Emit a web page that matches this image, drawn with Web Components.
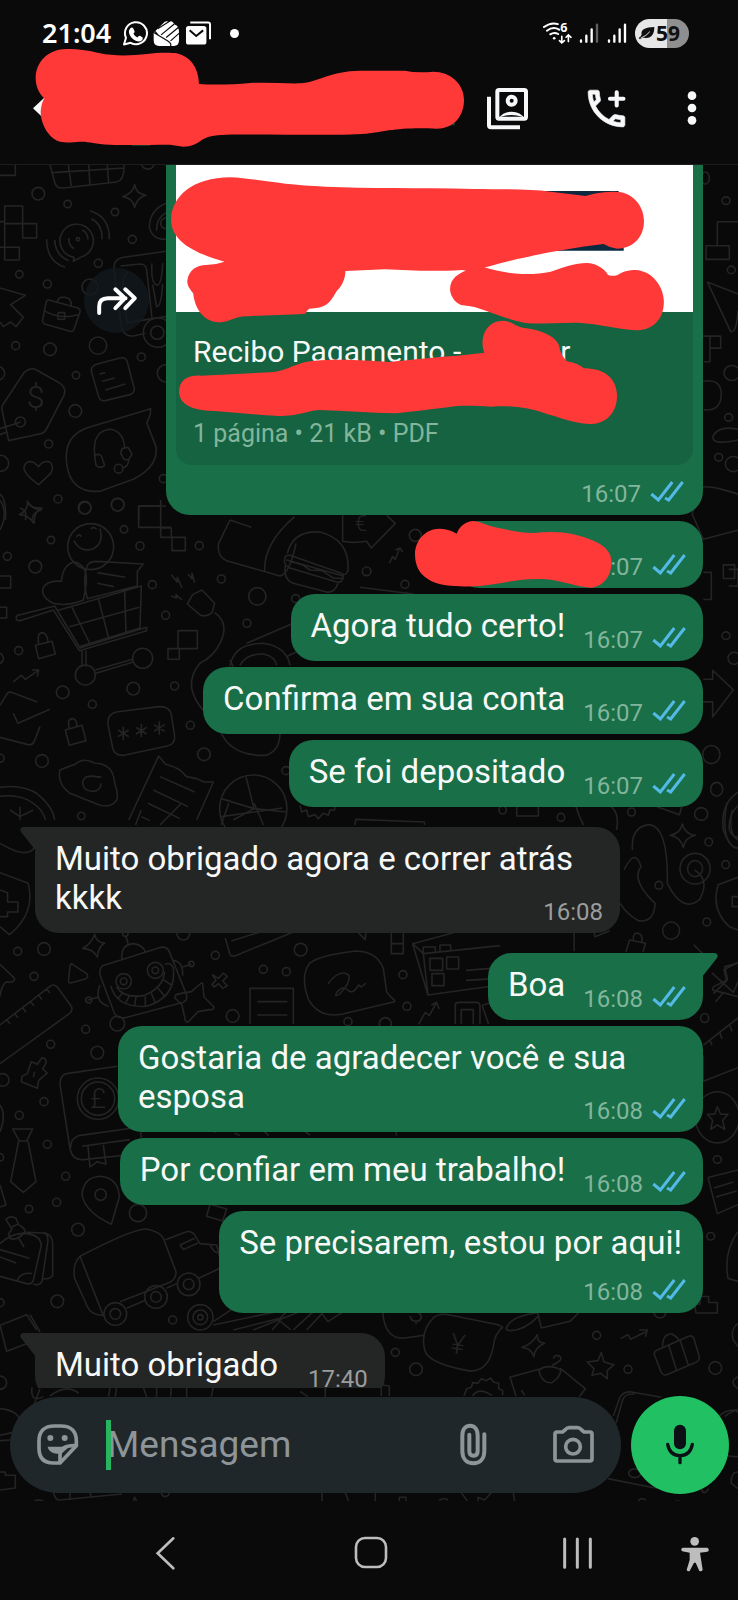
<!DOCTYPE html>
<html lang="pt-BR">
<head>
<meta charset="utf-8">
<meta name="viewport" content="width=device-width, initial-scale=1">
<title>Conversa</title>
<style>
  html, body { margin: 0; height: 100%; background: #0a0a0a; }
  body { font-family: Roboto, "Noto Sans", sans-serif; color: #f7f8f8; }
</style>
</head>
<body>
<chat-app></chat-app>

<template id="wallpaper-art">
  <svg viewBox="0 165 738 1336" preserveAspectRatio="xMidYMin slice" aria-hidden="true">
    <g transform="translate(0 160) scale(.3333)">
      <path d="M0 46H46V15M150 15L165 70Q170 86 190 84L350 66Q374 60 372 15M158 38L374 24M205 15L214 78M266 15L270 74M322 15L326 68M425 15A20 20 0 0 0 462 15"/>
      <path d="M404 74Q408 102 438 106Q412 112 404 142Q398 114 368 110Q400 100 404 74ZM14 138H68V191H110V234H68V191H14ZM0 185H14M14 191V262M0 262H58V300H14V262"/>
      <path d="M222 292A50 50 0 1 1 246 290L220 304Z"/><circle cx="234" cy="238" r="5"/>
      <path d="M270 152Q330 170 328 238M274 176Q308 192 306 238M140 238Q140 305 196 322M164 240Q166 286 206 302M206 234Q206 258 222 266M246 210Q262 216 264 238M498 130Q450 150 448 200Q456 240 498 238M498 158Q468 176 470 212M498 174A14 14 0 0 0 498 206"/>
      <path d="M498 274L370 292Q338 298 342 330L364 500Q370 530 400 528L436 520M362 318L420 312Q438 312 440 330L456 474M384 336Q360 360 372 400L380 488L498 470M456 310Q452 370 470 376Q486 376 488 310M458 374L470 440Q484 440 488 372"/>
      <circle cx="474" cy="518" r="44"/><circle cx="472" cy="518" r="20"/><circle cx="270" cy="381" r="24"/>
      <path d="M0 384L76 406L32 434L70 472L48 500L32 486L10 500L0 486M146 420L234 444Q242 448 240 456L222 508Q218 516 210 514L134 492Q126 488 128 480L138 428Q140 420 146 420ZM172 426Q174 410 194 412Q216 414 214 440M132 452Q180 480 234 464M174 458H194V478H174Z"/>
      <path d="M72 638Q92 620 110 630L180 670Q200 684 192 706L140 806Q134 820 118 822L26 842L6 750Q4 740 10 732ZM0 806L62 786M0 824L20 816"/><circle cx="61" cy="786" r="15"/>
      <path d="M292 612L360 594Q378 590 382 606L402 682Q406 698 390 704L316 722Q300 724 296 710L274 634Q272 618 292 612ZM298 642L316 638M306 664L344 654M316 690L376 672M452 746L380 768L260 804Q190 830 200 910Q210 1000 300 994L400 958Q476 920 468 860L440 788Q452 770 452 746Z"/>
      <path d="M284 886Q276 810 334 808Q370 816 374 862M284 888Q294 878 304 888L314 916Q300 928 288 916ZM366 866L384 862L396 882L386 900L372 898L362 880ZM386 900Q386 920 366 924"/><circle cx="356" cy="926" r="13"/>
      <path d="M116 974Q70 942 72 920Q80 898 102 908L116 920Q128 900 150 906Q164 920 152 940ZM80 1022Q92 1046 124 1050Q98 1056 96 1080M76 1080Q84 1052 60 1044M0 1002Q20 1020 16 1080M416 1080V1038H498"/>
      <g><circle cx="115" cy="101" r="19"/><circle cx="203" cy="132" r="11"/><circle cx="345" cy="156" r="11"/><circle cx="397" cy="238" r="12"/><circle cx="295" cy="310" r="12"/><circle cx="58" cy="343" r="11"/><circle cx="142" cy="372" r="12"/><circle cx="47" cy="557" r="12"/><circle cx="150" cy="568" r="19"/><circle cx="294" cy="557" r="26"/><circle cx="424" cy="591" r="12"/><circle cx="228" cy="646" r="11"/><circle cx="-6" cy="640" r="20"/><circle cx="226" cy="753" r="19"/><circle cx="146" cy="852" r="12"/><circle cx="2" cy="910" r="24"/><circle cx="174" cy="1017" r="12"/><circle cx="255" cy="1044" r="18"/><circle cx="353" cy="1034" r="19"/><circle cx="490" cy="956" r="12"/><circle cx="498" cy="640" r="26"/></g>
      <text x="80" y="744" font-size="96">$</text>
    </g>
    <g transform="translate(0 500) scale(.3333)">
      <path d="M84 6Q92 26 126 24Q102 34 102 70Q84 44 58 44Q82 34 84 6ZM0 0Q26 40 0 90M416 18H482V112H514V84H482V0M416 18V82H514M516 112H556V152H516Z"/>
      <circle cx="272" cy="140" r="69"/><path d="M222 122Q240 160 280 146Q312 130 300 86M228 110L238 104L244 110M272 86L282 82L290 88"/>
      <path d="M250 300Q200 320 160 310Q120 290 130 262Q144 240 184 244Q190 190 226 186Q270 200 256 270ZM262 196Q270 184 290 184L430 192L412 214V258L262 296Q246 240 262 196ZM292 218L376 232M292 250L342 260M50 360Q44 346 60 344L164 318L240 444L440 382V392L238 452L160 330L60 362ZM170 332L424 258L420 384L238 440M215 320L270 432M295 296L326 414M374 272L378 396M208 380L418 322M246 452V500M258 452V500M286 510L398 478M288 520L400 486"/>
      <circle cx="256" cy="525" r="30"/><circle cx="428" cy="475" r="30"/>
      <path d="M106 436L156 424L166 462L116 476ZM116 430Q110 396 130 398Q142 402 144 426M40 546L64 526L76 538L114 512M96 510L116 510L112 530M0 228H32V264H0M0 322H20V354H0M0 616L22 580Q28 574 38 578L112 606M40 640L54 670L150 628M0 712L84 734Q96 736 102 726L120 680M196 690L246 676L258 722L208 736ZM208 686Q200 654 220 656Q232 660 230 680"/>
      <path d="M348 636L476 620Q508 618 514 644L524 708Q526 732 502 738L372 766Q344 768 338 744L324 674Q322 642 348 636Z"/>
      <path d="M370 680V720M354 690L386 710M386 690L354 710M424 672V712M408 682L440 702M440 682L408 702M478 664V704M462 674L494 694M494 674L462 694"/>
      <path d="M514 224L532 246L532 232L546 264M564 222L576 236V220L584 248M514 288L530 294L528 284L546 300M562 312L578 284L606 270L644 310L636 338Q620 352 602 346ZM644 338Q690 370 660 430Q640 470 600 490Q540 560 620 642M534 392H592V446H534ZM504 446H538V478H504Z"/>
      <path d="M690 60L656 130Q650 170 680 182L840 228Q870 220 888 130M884 50Q790 130 794 216M690 60L754 82M862 160Q880 90 960 96Q1050 120 1044 210Q1040 230 1024 220L870 166Q856 164 854 176Q850 196 870 204L1010 246Q1030 250 1030 228L860 180L910 196L930 210L966 212L1000 234L1030 236M856 196Q850 240 880 250L980 276Q1004 280 1014 250M1028 46V124Q1060 130 1100 124L1114 144L1186 70L1160 46M1168 190L1178 170L1186 178L1198 146M1186 150L1200 144L1208 156M1080 262L1240 282"/>
      <path d="M690 500Q700 430 790 430Q860 440 870 496M720 496Q740 460 790 462Q826 470 830 496M740 430L880 370M860 470L900 450M660 690Q690 770 800 766Q840 750 840 700M700 500L690 480"/>
      <path d="M180 810Q220 794 224 794Q250 770 284 790Q340 790 344 850Q356 880 350 900Q336 924 300 916L210 880Q170 850 180 810ZM296 832Q250 820 248 850Q254 880 290 872Q304 864 302 850M290 832L304 830M386 960L476 768L496 792L520 800L540 810L560 830L590 836L612 846L640 846L590 960M480 830L584 876M460 870L564 920M444 910L540 956M424 950L450 962"/>
      <circle cx="760" cy="926" r="101"/><path d="M738 830L762 926L860 936M762 926L700 960M762 926L664 896M-10 864Q60 850 110 880Q160 920 164 960M-10 890Q60 880 100 910Q130 930 136 960M60 920V960M60 950L30 930M60 950L100 930M900 916L905 936L920 930L925 950L945 944L955 956L970 940L985 946L990 930L1004 930V914"/>
      <g><circle cx="254" cy="23" r="19"/><circle cx="353" cy="14" r="19"/><circle cx="372" cy="88" r="11"/><circle cx="153" cy="120" r="11"/><circle cx="420" cy="138" r="12"/><circle cx="22" cy="169" r="12"/><circle cx="106" cy="200" r="19"/><circle cx="598" cy="137" r="12"/><circle cx="457" cy="254" r="12"/><circle cx="664" cy="237" r="12"/><circle cx="772" cy="289" r="26"/><circle cx="887" cy="296" r="12"/><circle cx="497" cy="346" r="12"/><circle cx="741" cy="370" r="12"/><circle cx="56" cy="452" r="12"/><circle cx="-6" cy="475" r="16"/><circle cx="524" cy="558" r="12"/><circle cx="400" cy="566" r="19"/><circle cx="188" cy="577" r="19"/><circle cx="277" cy="613" r="12"/><circle cx="571" cy="676" r="12"/><circle cx="612" cy="763" r="19"/><circle cx="126" cy="783" r="19"/><circle cx="0" cy="775" r="12"/><circle cx="858" cy="812" r="12"/><circle cx="244" cy="948" r="11"/><circle cx="1100" cy="214" r="13"/><circle cx="1215" cy="253" r="12"/><circle cx="1246" cy="106" r="18"/></g>
      <text x="1064" y="94" font-size="66">€</text>
    </g>
    <g transform="translate(0 800) scale(.4706 .3333)">
      <path d="M288 75L300 30M340 75L384 12M470 75L486 10M470 50L600 24M540 10L560 75M754 75L756 58L902 66V75M1222 10Q1230 50 1240 75M1310 90Q1320 20 1280 10M1396 20L1444 44L1450 12M1098 14V48H1144V14M1344 150Q1340 80 1380 74Q1420 80 1418 250Q1450 340 1486 300Q1510 240 1476 210M1326 210Q1350 140 1362 200Q1340 240 1392 310Q1390 370 1356 362Q1330 340 1318 310"/>
      <path d="M1450 72Q1456 104 1478 106Q1456 112 1452 142Q1446 112 1424 106Q1446 100 1450 72ZM1568 232L1526 254Q1510 330 1550 380L1568 390M1568 290H1556V320H1568M1544 10Q1530 130 1568 146M1556 30Q1546 100 1568 120"/>
      <ellipse cx="1477" cy="206" rx="32" ry="46"/><ellipse cx="1477" cy="206" rx="16" ry="24"/><ellipse cx="1426" cy="392" rx="18" ry="26"/><ellipse cx="1400" cy="256" rx="8" ry="12"/><ellipse cx="1506" cy="126" rx="8" ry="12"/><ellipse cx="1490" cy="42" rx="14" ry="19"/><ellipse cx="1342" cy="36" rx="8" ry="12"/><ellipse cx="1192" cy="52" rx="8" ry="12"/><ellipse cx="1068" cy="30" rx="8" ry="12"/><ellipse cx="1542" cy="194" rx="8" ry="12"/><ellipse cx="1502" cy="366" rx="8" ry="12"/>
      <path d="M0 218L60 250Q76 340 20 404L0 380M0 270L16 278V306H38V336H16V350H0M1330 456L1338 420L1372 430L1366 456M1346 424Q1344 396 1356 400Q1366 404 1364 426M1220 392V454M1262 392L1264 410L1296 392M1474 434L1494 462M1568 490L1540 500L1546 540L1516 560L1514 570L1568 590M1538 576L1520 606M0 130Q60 180 74 140"/>
    </g>
    <g transform="translate(0 925) scale(.3333)">
      <path d="M284 28Q290 54 314 54Q294 66 292 96Q280 72 248 70Q274 58 284 28ZM0 118L44 160Q44 176 20 170Q4 180 0 214M214 116L260 146Q268 156 256 162L212 174Q204 174 206 164L210 122ZM0 300L150 184Q160 176 170 184L214 244Q220 256 208 266L0 416M20 284L30 296M44 266L54 278M68 248L78 262M92 230L102 242M116 210L126 224M140 192L150 204"/>
      <path d="M308 122L478 68Q500 62 508 80L560 210Q562 226 550 232L376 278Q350 282 342 262L300 150Q298 130 308 122ZM366 104Q360 60 400 56Q430 60 436 82M378 34L384 56M300 180Q280 230 326 244M262 226L296 216M520 106Q550 110 548 152M548 126L574 118M332 182Q350 250 440 244Q530 216 520 130Q514 110 494 118M350 186Q370 220 430 212Q490 190 494 140M352 222L368 204M376 236L388 212M404 242L408 216M436 244V214M466 234L454 204M494 214L474 190M514 180L490 164"/>
      <circle cx="371" cy="169" r="23"/><circle cx="371" cy="169" r="10"/><circle cx="466" cy="136" r="24"/><circle cx="466" cy="136" r="10"/><circle cx="266" cy="225" r="9"/><circle cx="574" cy="117" r="8"/><circle cx="376" cy="26" r="8"/>
      <path d="M608 174L612 216L642 246Q640 256 630 254L594 260L564 292Q554 290 554 276L546 240L524 218Q524 208 540 206L574 200L604 174ZM638 150L656 160L670 144L682 154L668 168L682 182L668 190L656 176L642 186L636 178L648 166ZM676 40L690 88Q694 96 706 92L888 18M694 48L790 18M750 296V190H880V296M772 230H862M772 270H862M1184 230L1050 262Q960 290 924 220Q900 150 930 114Q960 90 1070 78Q1130 80 1150 130L1160 200Q1166 210 1184 226ZM984 176Q1020 130 1046 150Q1054 170 1020 206Q1000 220 1012 200Q1030 180 1044 196Q1060 210 1076 180L1084 186L1098 174M1070 18L1096 44L1098 18M1174 18V86H1210V18M1174 56H1210M1500 62L1270 86L1284 210L1500 180M1270 86L1238 56L1380 18M1238 56L1284 210M1290 100H1328V136H1290ZM1340 96H1376V132H1340ZM1296 146H1332V182H1296ZM1270 84V66H1306V82M1320 78V60H1352V78M1398 136L1500 128M1398 166L1500 160M1256 298L1276 262L1288 272L1308 236M1294 240L1310 232L1318 252M1366 298V240Q1366 232 1376 232H1430Q1440 232 1440 242V298M1384 298V254H1420V298M1446 240L1466 298M1448 240L1480 232"/>
      <path d="M126 398Q140 400 138 414L128 432L142 444L116 466L112 490L64 470L66 454L82 446L94 410L112 418ZM104 440L100 456M352 424L200 446Q180 450 180 480L210 670Q216 706 250 704L380 690M212 670Q210 640 236 632L420 606L424 640M246 664L390 644M264 664L270 726L292 710L318 718L310 660"/>
      <circle cx="294" cy="521" r="62"/><circle cx="294" cy="521" r="50"/>
      <path d="M38 612H98L80 648H58ZM56 648L32 770L70 802L108 770L84 648M0 540Q20 570 0 620M0 780L18 840L0 846M334 898Q256 862 246 810Q250 756 302 754Q356 760 358 816ZM630 838L680 852L668 888L620 874ZM640 620H650M704 624L720 632M790 616L806 632M910 616L930 630M1186 616L1190 632M18 884Q30 870 48 880L56 900Q72 906 76 920Q50 950 30 940L26 926L36 912ZM54 936L72 966M36 906L56 896M0 956Q40 920 80 926Q120 930 124 960L100 1066Q96 1080 80 1076L0 1054M80 922L130 924Q144 926 144 946L126 1070Q120 1082 100 1078M130 922Q160 930 158 960V1050Q156 1062 130 1062M0 974L88 1000M0 996L48 1014M50 1070Q60 1040 96 1046M240 994Q400 910 440 912Q480 920 490 940L528 1040Q530 1060 510 1072L360 1130M310 1172Q270 1170 260 1140L224 1060Q216 1020 240 994ZM496 944L560 920Q580 916 590 940L600 956L650 960L660 1000M540 960L584 940M540 960L550 974L594 954M380 1150L436 1126M500 1090L530 1076M596 1060L660 1030M640 1200L830 1160M700 1215L840 1180L860 1160M630 960Q640 980 652 984M640 1190L700 1150M760 1215L900 1160M816 1215L840 1188L872 1215M880 1215L940 1160M920 1215L966 1166L984 1190L1030 1160"/>
      <circle cx="346" cy="1167" r="34"/><circle cx="346" cy="1167" r="16"/><circle cx="468" cy="1116" r="34"/><circle cx="468" cy="1116" r="16"/><circle cx="566" cy="1078" r="34"/><circle cx="566" cy="1078" r="16"/><circle cx="601" cy="1177" r="38"/><circle cx="601" cy="1177" r="22"/><circle cx="601" cy="1177" r="8"/>
      <g><circle cx="53" cy="79" r="12"/><circle cx="132" cy="72" r="19"/><circle cx="102" cy="154" r="12"/><circle cx="550" cy="26" r="19"/><circle cx="646" cy="91" r="12"/><circle cx="790" cy="133" r="12"/><circle cx="859" cy="140" r="12"/><circle cx="902" cy="74" r="19"/><circle cx="698" cy="273" r="19"/><circle cx="352" cy="296" r="22"/><circle cx="257" cy="313" r="12"/><circle cx="152" cy="358" r="12"/><circle cx="292" cy="383" r="19"/><circle cx="8" cy="465" r="19"/><circle cx="132" cy="530" r="12"/><circle cx="58" cy="571" r="12"/><circle cx="142" cy="658" r="12"/><circle cx="0" cy="697" r="11"/><circle cx="197" cy="754" r="12"/><circle cx="170" cy="832" r="12"/><circle cx="87" cy="852" r="11"/><circle cx="302" cy="809" r="17"/><circle cx="414" cy="864" r="26"/><circle cx="234" cy="914" r="19"/><circle cx="172" cy="1129" r="19"/><circle cx="0" cy="1133" r="12"/><circle cx="518" cy="1185" r="12"/><circle cx="1209" cy="149" r="12"/><circle cx="1221" cy="244" r="12"/><circle cx="1044" cy="290" r="12"/><circle cx="1156" cy="296" r="18"/></g>
      <text x="270" y="550" font-size="84">£</text>
    </g>
    <g transform="translate(600 160) scale(.3333 .7526)">
      <path d="M352 82H414M352 82V114H388V132H318V114H352M322 162L392 228Q410 230 414 200M322 162L414 178M310 234H362V250H330V268H312M330 234V250M310 294Q364 290 364 312Q362 334 312 332M340 366Q360 352 414 358M340 366Q330 380 414 372M276 470L306 436Q316 430 414 444M276 470L310 504L414 492M310 548H334V584H310M370 538H404V556H370ZM386 544H414V566H386M310 690H338V678L400 704L338 740V720H310M414 840Q360 856 370 890Q390 916 414 914M414 858Q384 870 388 890Q398 900 414 900M336 1080L400 1106L414 1092M414 1066L372 1076L380 1090L340 1108M310 1176L414 1140M310 1190V1224L414 1206M330 1170L336 1176M360 1160L366 1168M390 1150L396 1158M352 1258L362 1268H384L368 1276L374 1288L352 1282L332 1288L338 1276L322 1268H344ZM324 1352L414 1342M324 1352L352 1400L414 1388M342 1366L400 1358M348 1378L410 1370M414 1424Q370 1450 384 1486L414 1490M284 1520H300V1510H326V1518H352V1532H288Z"/>
      <ellipse cx="352" cy="1272" rx="66" ry="34"/><ellipse cx="334" cy="790" rx="26" ry="12"/><ellipse cx="350" cy="836" rx="18" ry="9"/><ellipse cx="378" cy="54" rx="12" ry="5"/><ellipse cx="316" cy="24" rx="12" ry="8"/><ellipse cx="394" cy="146" rx="12" ry="5"/><ellipse cx="396" cy="283" rx="24" ry="10"/><ellipse cx="386" cy="342" rx="12" ry="5"/><ellipse cx="356" cy="395" rx="12" ry="5"/><ellipse cx="400" cy="404" rx="24" ry="10"/><ellipse cx="378" cy="632" rx="12" ry="5"/><ellipse cx="402" cy="662" rx="18" ry="8"/><ellipse cx="314" cy="1140" rx="12" ry="6"/><ellipse cx="352" cy="1328" rx="12" ry="5"/><ellipse cx="332" cy="1430" rx="12" ry="5"/>
    </g>
    <g transform="translate(368 1310) scale(.3333)">
      <path d="M44 4Q50 90 110 84L168 76M404 52Q380 70 376 110Q360 190 300 182Q180 160 170 120Q156 60 200 20Q220 8 250 16L390 44ZM416 52Q430 20 500 10Q516 6 510 20Q470 60 430 62Q410 60 416 52ZM508 4L520 54L606 34L636 4M508 74Q506 98 530 100Q500 112 498 140Q490 114 462 112Q494 102 508 74ZM758 86L780 74L788 88L832 66M814 60L838 60L832 80M868 120L964 78Q974 76 978 86L994 140Q996 150 986 156L896 194Q886 198 880 188L860 136Q856 124 868 120ZM884 110Q884 70 912 72Q934 84 932 94M902 104L926 182M936 90L962 168M700 128L708 156L738 164L718 182V206L698 190L672 196L678 176L658 156L690 152ZM444 258L426 202L512 178Q520 220 552 218Q580 200 578 176L652 236L634 260M512 180Q540 160 580 180M552 166Q590 150 574 138Q560 132 556 146M460 240L470 256M288 258L296 236L310 232L314 218L330 220L340 206L354 212L368 204L376 216L392 220L392 236L404 242L404 256M314 258Q330 230 372 256M736 318L756 262Q766 244 790 246L880 262M744 340L764 270Q770 250 800 252M720 506L850 532L870 534M1110 40Q1086 60 1096 90L1110 110M1110 200Q1080 216 1110 236M1070 320Q1110 290 1110 310M1110 486Q1088 486 1090 520L1110 536M22 548V576M94 576V562H114V576M280 548L300 576M330 576V562L350 570L370 548M436 548L440 576M212 576Q220 560 240 570M810 576Q816 560 834 570M916 576Q930 570 942 576M1000 536Q1008 560 1022 536M34 224L64 228V258M40 258V230"/>
      <ellipse cx="800" cy="490" rx="18" ry="13"/><circle cx="686" cy="76" r="12"/><circle cx="780" cy="178" r="12"/><circle cx="144" cy="178" r="19"/><circle cx="82" cy="127" r="12"/><circle cx="1042" cy="174" r="19"/><circle cx="876" cy="6" r="18"/><circle cx="1100" cy="370" r="70"/>
      <text x="248" y="132" font-size="84" transform="rotate(8 270 100)">¥</text><text x="120" y="36" font-size="84">$</text>
    </g>
    <g transform="translate(0 1310) scale(.3333)">
      <path d="M0 46L80 14L110 60M90 14L120 66M0 46L20 124L110 90M0 296Q50 300 60 330M0 376L36 368M0 392L30 390M0 486H16V496H46V534L0 540M160 546Q166 572 180 570L366 552M210 548V570M270 548L274 562M484 548Q486 560 496 560Q508 558 508 546M400 574L404 562L410 574M966 546V574M1036 548L1046 574M330 232L326 260M350 232L346 260M430 232L440 260M470 232V260M514 232L512 260M560 232V260M640 232L634 260M120 236L100 290M236 250Q200 220 150 258M96 232Q90 280 130 260M900 244L924 260M976 232V260M102 574Q116 566 130 574"/>
      <circle cx="0" cy="218" r="20"/>
    </g>
  </svg>
</template>

<script>
const ICONS = {
  whatsapp: ['368 60 78 80', 26, 27, '<path d="M374 133L380 113A33 33 0 1 1 394 128Z" fill="none" stroke="currentColor" stroke-width="6" stroke-linejoin="round"/><path fill="currentColor" d="M393 84q5-5 9 1l4 9q0 4-4 7q5 8 12 11q4-6 8-5l8 5q2 9-10 12q-13 0-24-12q-9-12-7-21z"/>'],
  hands: ['464 60 80 80', 27, 27, '<path fill="currentColor" d="M466 98L498 66Q505 61 511 66Q520 60 524 68L529 74Q538 76 538 84Q541 88 541 94V122Q540 136 526 137H482Q466 136 466 120Z"/><path fill="none" stroke="#0a0a0a" stroke-width="3.5" d="M465 96L508 122Q520 130 516 138M478 86L513 64M488 104L527 72M503 112L539 82M516 122L542 99M479 104L470 94"/>'],
  mail: ['558 62 82 78', 27, 26, '<rect x="561" y="80" width="62" height="56" rx="8" fill="currentColor"/><path d="M574 69H628Q634 69 634 75V120" fill="none" stroke="currentColor" stroke-width="6"/><path d="M572 93L592 110L613 93" fill="none" stroke="#0a0a0a" stroke-width="6"/>'],
  wifi: ['526 62 94 72', 31, 24, '<g fill="none" stroke="currentColor" stroke-width="6" stroke-linecap="round"><path d="M532 80Q554 64 574 71M541 91Q560 77 578 88M551 102Q563 94 575 101"/><path stroke-width="5" d="M586 108V127M579 121L586 128L594 121M606 124V105M599 111L606 104L614 111"/></g><circle cx="563" cy="114" r="4" fill="currentColor"/><text x="581" y="94" font-size="38" font-weight="700" font-family="Noto Sans, sans-serif" fill="currentColor">6</text>'],
  signalWeak: ['634 64 66 66', 22, 22, '<g stroke="currentColor" stroke-width="7" stroke-linecap="round"><path d="M640 119V123M656 105V123M672 86V123"/><path d="M688 72V123" opacity=".35"/></g>'],
  signal: ['634 64 66 66', 22, 22, '<g stroke="currentColor" stroke-width="7" stroke-linecap="round"><path d="M640 119V123M656 105V123M672 86V123M688 72V123"/></g>'],
  leaf: ['806 78 52 42', 17, 14, '<path fill="currentColor" d="M817 104C814 88 828 82 856 81C856 104 846 116 828 114Q820 113 812 118L808 114Q815 110 817 104Z"/><path d="M814 115Q832 108 842 95" fill="none" stroke="#e6e6e6" stroke-width="3"/>'],
  back: ['96 288 42 72', 14, 24, '<path fill="currentColor" d="M99 325L136 290V360Z"/>'],
  contact: ['354 259 129 129', 43, 43, '<g fill="none" stroke="currentColor"><rect x="388" y="268" width="86" height="86" rx="5" stroke-width="12"/><path stroke-width="12" d="M363 288V374Q363 380 369 380H456"/><circle cx="431" cy="300" r="12" stroke-width="12"/></g><path fill="currentColor" d="M392 354Q404 333 431 333Q458 333 470 354L462 348Q446 343 431 343Q416 343 400 348Z"/>'],
  call: ['0 0 24 24', 49, 49, '<path fill="currentColor" stroke="currentColor" stroke-width=".3" d="M6.540 5c.06.89.21 1.760.45 2.590l-1.200 1.200c-.41-1.200-.67-2.470-.76-3.790h1.510m9.860 12.020c.85.24 1.720.39 2.600.45v1.490c-1.320-.09-2.590-.35-3.800-.75l1.200-1.190M7.500 3H4c-.55 0-1 .45-1 1 0 9.390 7.610 17 17 17 .55 0 1-.45 1-1v-3.490c0-.55-.45-1-1-1-1.240 0-2.450-.2-3.570-.57-.1-.04-.21-.05-.31-.05-.26 0-.51.1-.71.29l-2.200 2.200c-2.830-1.450-5.150-3.760-6.590-6.590l2.200-2.200c.28-.28.36-.67.25-1.020C8.700 6.450 8.500 5.250 8.500 4c0-.55-.45-1-1-1z"/><path d="M17 4V10.500M13.700 7.250H20.300" stroke="currentColor" stroke-width="2" stroke-linecap="round"/>'],
  more: ['950 268 48 114', 16, 38, '<g fill="currentColor"><circle cx="974" cy="288" r="13"/><circle cx="974" cy="325" r="13"/><circle cx="974" cy="362" r="13"/></g>'],
  forward: ['284 370 132 100', 44, 33, '<path d="M296 458V438Q296 413 322 413H376M345 386L374 413L345 443M375 386L404 413L375 443" fill="none" stroke="currentColor" stroke-width="12" stroke-linecap="round" stroke-linejoin="round"/>'],
  ticks: ['1114 563 102 66', 34, 22, '<path d="M1118 605L1139 623L1181 569M1159 617L1170 623L1212 569" fill="none" stroke="#53b9e6" stroke-width="9"/>'],
  sticker: ['108 336 129 129', 43, 43, '<g fill="none" stroke="currentColor" stroke-width="11"><path d="M163 345H183C213 345 229 361 229 390V404L180 456H160C130 456 117 440 117 412V390C117 361 133 345 163 345Z" stroke-linejoin="round"/><path d="M229 404C200 403 181 408 180 432V456"/></g><g fill="currentColor"><circle cx="151" cy="381" r="9"/><circle cx="194" cy="381" r="9"/><path d="M143 407H208L184 428C166 430 146 424 143 407Z"/></g>'],
  clip: ['279 336 81 129', 27, 43, '<path d="M352 370V420C352 444 338 457 319 457C300 457 286 444 286 420V374C286 354 297 344 309 344C322 344 332 354 332 374V420C332 430 327 434 320 434C312 434 307 430 307 420V371" fill="none" stroke="currentColor" stroke-width="12" stroke-linecap="round"/>'],
  camera: ['552 339 129 123', 43, 41, '<g fill="none" stroke="currentColor" stroke-width="11"><path d="M567 363H584L592 356Q597 350 604 350H628Q635 350 640 356L648 363H666Q672 363 672 369V444Q672 450 666 450H567Q561 450 561 444V369Q561 363 567 363Z"/><circle cx="615" cy="407" r="22"/></g>'],
  mic: ['888 336 96 123', 32, 41, '<rect x="918" y="338" width="36" height="74" rx="18" fill="currentColor"/><path d="M899 397C903 420 917 431 936 431C955 431 969 420 973 397M936 431V452" fill="none" stroke="currentColor" stroke-width="10" stroke-linecap="round"/>'],
  navBack: ['462 676 69 108', 23, 36, '<path d="M520 686L473 731L520 776" fill="none" stroke="currentColor" stroke-width="8" stroke-linecap="round"/>'],
  navHome: ['0 0 36 36', 36, 36, '<rect x="3" y="3" width="30" height="29" rx="9" fill="none" stroke="currentColor" stroke-width="2.600"/>'],
  navRecent: ['580 676 105 108', 35, 36, '<path d="M594 688V773M632 688V773M671 688V773" stroke="currentColor" stroke-width="9" stroke-linecap="round"/>'],
  person: ['938 675 90 120', 30, 40, '<g fill="currentColor"><circle cx="982" cy="700" r="13"/><path d="M946 719H1020Q1026 721 1024 729Q1022 732 998 734L1006 785Q1004 792 996 789L985 764H980L967 789Q960 792 958 785L967 756V734L945 730Q938 724 946 719Z"/></g>']
};

class UiIcon extends HTMLElement {
  connectedCallback() {
    const [box, w, h, body] = ICONS[this.getAttribute('name')];
    this.attachShadow({ mode: 'open' }).innerHTML =
      `<style>:host{display:inline-flex;flex:none}svg{display:block}</style>
       <svg width="${w}" height="${h}" viewBox="${box}" aria-hidden="true">${body}</svg>`;
  }
}
customElements.define('ui-icon', UiIcon);

class StatusBar extends HTMLElement {
  connectedCallback() {
    this.attachShadow({ mode: 'open' }).innerHTML = `
    <style>
      :host { display: flex; align-items: center; height: 66px; padding: 0 49px 0 42px; box-sizing: border-box; color: #fff; }
      .time { font: 600 27px/34px "Noto Sans", sans-serif; margin-right: 11px; }
      .apps { display: flex; align-items: center; gap: 5px; flex: 1; }
      .dot { width: 9px; height: 9px; border-radius: 50%; background: #fff; margin-left: 13px; }
      .system { display: flex; align-items: center; gap: 6px; }
      .battery { display: flex; align-items: center; height: 29px; width: 54px; box-sizing: border-box; padding-left: 3px; gap: 1px;
        border-radius: 15px; background: linear-gradient(90deg, #e6e6e6 59%, #8f8f8f 59%); color: #101010; font: 700 21px/29px "Noto Sans", sans-serif; }
    </style>
    <span class="time">21:04</span>
    <span class="apps"><ui-icon name="whatsapp"></ui-icon><ui-icon name="hands"></ui-icon><ui-icon name="mail"></ui-icon><i class="dot"></i></span>
    <span class="system"><ui-icon name="wifi"></ui-icon><ui-icon name="signalWeak"></ui-icon><ui-icon name="signal"></ui-icon>
      <span class="battery"><ui-icon name="leaf"></ui-icon>59</span></span>`;
  }
}
customElements.define('status-bar', StatusBar);

class ChatHeader extends HTMLElement {
  connectedCallback() {
    this.attachShadow({ mode: 'open' }).innerHTML = `
    <style>
      :host { display: flex; align-items: center; position: relative; height: 99px; padding: 0 38px 14px 32px; box-sizing: border-box;
        border-bottom: 1px solid #1c1c1c; }
      button { all: unset; display: flex; color: #f7f8fa; }
      .actions { display: flex; align-items: center; margin-left: auto; }
      .actions button:nth-child(2) { margin: 0 53px; }
      .mark { position: absolute; left: 0; top: -66px; overflow: visible; pointer-events: none; }
    </style>
    <button aria-label="Voltar"><ui-icon name="back"></ui-icon></button>
    <div class="actions">
      <button aria-label="Contato"><ui-icon name="contact"></ui-icon></button>
      <button aria-label="Ligar"><ui-icon name="call"></ui-icon></button>
      <button aria-label="Mais opções"><ui-icon name="more"></ui-icon></button>
    </div>
    <svg class="mark" width="470" height="150" viewBox="0 0 1410 450" aria-hidden="true">
      <path fill="#0e4a31" d="M395 425H450V437H395ZM1340 366H1364V376H1340Z"/>
      <path fill="#ff3838" d="M107 235C107 185 145 147 200 147C240 147 270 152 300 160C340 169 400 167 440 162C470 158 510 157 530 160C570 170 595 200 597 252C640 255 700 254 750 249C800 246 850 251 900 250C960 245 990 213 1080 212L1215 212Q1250 220 1300 215C1350 215 1392 250 1392 300C1392 340 1370 385 1310 386C1200 380 1150 395 1100 401C1000 408 800 402 680 404C640 405 620 410 605 420C590 432 575 440 550 440L510 434C450 434 380 436 330 434C280 432 270 424 240 425C210 428 200 428 180 425C145 415 122 370 122 335Q124 310 133 295C115 280 107 255 107 235Z"/>
    </svg>`;
  }
}
customElements.define('chat-header', ChatHeader);

class ChatWallpaper extends HTMLElement {
  connectedCallback() {
    const root = this.attachShadow({ mode: 'open' });
    root.innerHTML = `<style>
      :host { display: flex; flex-direction: column; position: relative; min-height: 0; background: #090909; overflow: hidden; }
      svg { position: absolute; inset: 0; width: 100%; height: 100%; }
      svg path, svg circle, svg ellipse { fill: none; stroke: #242424; stroke-width: 1.6px; vector-effect: non-scaling-stroke; stroke-linejoin: round; }
      svg text { fill: #242424; font-family: Roboto, sans-serif; font-weight: 300; }
      .content { position: relative; display: flex; flex-direction: column; flex: 1; min-height: 0; }
    </style>`;
    root.append(document.getElementById('wallpaper-art').content.cloneNode(true));
    root.append(Object.assign(document.createElement('div'), { className: 'content', innerHTML: '<slot></slot>' }));
  }
}
customElements.define('chat-wallpaper', ChatWallpaper);

class MessageMeta extends HTMLElement {
  connectedCallback() {
    this.attachShadow({ mode: 'open' }).innerHTML = `
    <style>
      :host { display: flex; gap: 9px; flex: none; font-size: 24px; line-height: 28px; color: var(--meta, #83b59c); }
    </style>
    <time>${this.getAttribute('time')}</time>${this.hasAttribute('read') ? '<ui-icon name="ticks"></ui-icon>' : ''}`;
  }
}
customElements.define('message-meta', MessageMeta);

/* By default the time sits beside the text; layout "over" puts it on the last line, "below" under the text. */
class ChatMessage extends HTMLElement {
  connectedCallback() {
    const out = this.hasAttribute('out');
    this.attachShadow({ mode: 'open' }).innerHTML = `
    <style>
      :host { display: flex; justify-content: flex-start; --bubble: #242626; --meta: #9b9d9d; --gap: 30px; }
      :host([out]) { justify-content: flex-end; --bubble: #186f48; --meta: #83b59c; --gap: 18px; }
      .bubble { position: relative; display: flex; align-items: flex-end; gap: var(--gap); box-sizing: border-box; max-width: 585px;
        padding: 12px 17px 7px 20px; border-radius: 24px; background: var(--bubble); }
      .text { font-size: 33px; line-height: 39px; min-height: 39px; padding-bottom: 9px; }
      :host([layout="over"]) .bubble { display: grid; }
      :host([layout="over"]) .text, :host([layout="over"]) message-meta { grid-area: 1 / 1; }
      :host([layout="over"]) message-meta { justify-self: end; }
      :host([layout="below"]) .bubble { flex-direction: column; align-items: flex-end; gap: 7px; }
      :host([layout="below"]) .text { padding-right: 4px; }
      :host([covered]) .bubble { width: 248px; justify-content: flex-end; }
      :host([tail]) .bubble { border-top-left-radius: 0; }
      :host([out][tail]) .bubble { border-radius: 24px 0 24px 24px; }
      .tail { position: absolute; top: 0; left: -15px; fill: var(--bubble); }
      :host([out]) .tail { left: auto; right: -15px; transform: scaleX(-1); }
      .mark { position: absolute; right: 91px; top: 0; overflow: visible; }
    </style>
    <div class="bubble">
      ${this.hasAttribute('tail') ? '<svg class="tail" width="16" height="24" viewBox="0 0 16 24" aria-hidden="true"><path d="M16 0H3Q-1 1 1 5L16 24Z"/></svg>' : ''}
      <div class="text"><slot></slot></div>
      <message-meta time="${this.getAttribute('time')}" ${out ? 'read' : ''}></message-meta>
      ${this.hasAttribute('covered') ? '<svg class="mark" width="197" height="67" viewBox="405 30 591 201" aria-hidden="true"><path fill="#ff3838" d="M405 130C405 90 435 52 480 53Q510 55 530 68C538 45 560 30 580 30C605 32 620 45 660 52C700 60 730 66 760 66C800 62 840 60 880 70C940 85 995 105 995 155C993 200 965 229 930 230C890 228 850 210 800 205C740 200 690 212 640 220C600 226 570 228 540 226C460 225 405 200 405 130Z"/></svg>' : ''}
    </div>`;
  }
}
customElements.define('chat-message', ChatMessage);

class DocumentMessage extends HTMLElement {
  connectedCallback() {
    this.attachShadow({ mode: 'open' }).innerHTML = `
    <style>
      :host { display: flex; justify-content: flex-end; align-items: flex-start; gap: 17px; }
      button { all: unset; display: flex; align-items: center; justify-content: center; width: 65px; height: 65px; margin-top: 103px;
        border-radius: 50%; background: #11191dcc; color: #fff; }
      .bubble { position: relative; box-sizing: border-box; width: 537px; padding: 0 10px 7px; border-radius: 0 0 24px 24px; background: #186f48; }
      .card { border-radius: 0 0 16px 16px; background: #156340; overflow: hidden; }
      .preview { height: 147px; background: #fff; }
      .info { padding: 22px 17px 17px; }
      .title { display: flex; gap: 99px; height: 72px; font-size: 30px; line-height: 36px; }
      .detail { margin-top: 14px; font-size: 25px; line-height: 28px; color: #83b59c; }
      message-meta { justify-content: flex-end; padding: 15px 9px 0 0; }
      .mark { position: absolute; left: 0; top: 0; overflow: visible; }
    </style>
    <button aria-label="Encaminhar"><ui-icon name="forward"></ui-icon></button>
    <div class="bubble">
      <div class="card">
        <div class="preview"></div>
        <div class="info">
          <div class="title"><span>Recibo Pagamento -</span><span>r</span></div>
          <div class="detail">1 página • 21 kB • PDF</div>
        </div>
      </div>
      <message-meta time="16:07" read></message-meta>
      <svg class="mark" width="536" height="350" viewBox="166 165 536 350" aria-hidden="true">
        <g transform="translate(160 160) scale(.3686 .3333)">
          <path fill="#0b2a3f" d="M1000 93H1243L1258 110V272H1000Z"/>
          <g fill="#ff3838">
          <path d="M30 180C30 110 90 52 190 52C260 55 330 76 450 80C560 86 700 82 850 87C930 88 1000 87 1060 95L1155 108C1180 98 1210 95 1235 95C1280 95 1313 135 1313 183C1313 235 1280 266 1240 266Q1220 263 1203 252C1130 262 1060 275 1000 290C930 305 900 318 880 322C930 340 1000 350 1060 335C1100 320 1130 308 1160 309C1190 312 1208 330 1215 344Q1225 350 1240 346C1260 332 1275 330 1290 330C1335 332 1367 380 1367 425C1367 475 1340 511 1290 511C1250 508 1190 492 1135 488C1080 488 1030 492 1000 490C960 485 900 458 860 443C840 436 820 437 815 434C795 425 786 400 787 385C788 355 810 340 830 332L820 330C740 335 680 332 610 328L503 333C503 350 497 375 480 392C465 420 455 440 425 444L405 446Q398 450 395 461C330 466 260 466 220 470C190 476 185 487 158 487C120 485 95 450 90 400C80 385 74 378 74 362C78 330 100 315 125 315Q150 315 175 305C110 285 30 250 30 180Z"/>
          <path d="M52 695C52 660 75 645 110 647L300 637C350 632 370 605 420 602C480 596 560 600 620 606C700 598 760 590 800 588L880 578C868 550 875 482 932 482C955 484 965 500 985 503C1030 508 1085 530 1085 570C1092 590 1100 600 1105 604Q1135 610 1150 625C1200 625 1240 650 1240 710C1238 765 1205 792 1165 792C1120 790 1080 770 1050 762C1000 742 950 736 900 740C850 738 820 735 780 742C720 750 680 756 640 760C570 758 500 752 430 750C400 752 380 768 320 768C250 765 200 755 130 752C90 748 52 735 52 695Z"/>
          </g>
        </g>
      </svg>
    </div>`;
  }
}
customElements.define('document-message', DocumentMessage);

class MessageList extends HTMLElement {
  connectedCallback() {
    this.attachShadow({ mode: 'open' }).innerHTML = `
    <style>
      :host { display: flex; flex-direction: column; gap: 6px; flex: 1; min-height: 0; overflow-y: auto; scrollbar-width: none; padding: 0 35px; }
      ::slotted(*) { flex: none; }
      ::slotted([tail]) { margin-top: 14px; }
    </style><slot></slot>`;
  }
}
customElements.define('message-list', MessageList);

class MessageComposer extends HTMLElement {
  connectedCallback() {
    this.attachShadow({ mode: 'open' }).innerHTML = `
    <style>
      :host { display: flex; align-items: center; gap: 10px; height: 113px; padding: 0 9px 0 10px; box-sizing: border-box; }
      .field { display: flex; align-items: center; flex: 1; min-width: 0; height: 96px; box-sizing: border-box; padding: 0 26px; border-radius: 48px; background: #1f272a; }
      button { all: unset; display: flex; flex: none; color: #8d9598; }
      .caret { width: 5px; height: 50px; background: #27b461; margin: 0 -5px 0 27px; z-index: 1; }
      input { all: unset; flex: 1; min-width: 0; font: 400 37px/50px Roboto, sans-serif; color: #f7f8f8; padding-left: 1px; }
      input::placeholder { color: #8d9598; opacity: 1; }
      .camera { margin-left: 65px; }
      .mic { width: 98px; height: 98px; border-radius: 50%; background: #21c063; color: #0a1014; align-items: center; justify-content: center; }
    </style>
    <div class="field">
      <button aria-label="Figurinhas"><ui-icon name="sticker"></ui-icon></button>
      <span class="caret"></span>
      <input type="text" placeholder="Mensagem" aria-label="Mensagem">
      <button aria-label="Anexar"><ui-icon name="clip"></ui-icon></button>
      <button class="camera" aria-label="Câmera"><ui-icon name="camera"></ui-icon></button>
    </div>
    <button class="mic" aria-label="Gravar áudio"><ui-icon name="mic"></ui-icon></button>`;
  }
}
customElements.define('message-composer', MessageComposer);

class SystemNav extends HTMLElement {
  connectedCallback() {
    this.attachShadow({ mode: 'open' }).innerHTML = `
    <style>
      :host { display: flex; align-items: center; height: 99px; padding: 5px 28px 0 62px; box-sizing: border-box; background: #0a0a0a; }
      button { all: unset; display: flex; flex: 1; justify-content: center; color: #bdbdbd; }
      .access { flex: none; }
    </style>
    <button aria-label="Voltar"><ui-icon name="navBack"></ui-icon></button>
    <button aria-label="Início"><ui-icon name="navHome"></ui-icon></button>
    <button aria-label="Recentes"><ui-icon name="navRecent"></ui-icon></button>
    <button class="access" aria-label="Acessibilidade"><ui-icon name="person"></ui-icon></button>`;
  }
}
customElements.define('system-nav', SystemNav);

class ChatApp extends HTMLElement {
  connectedCallback() {
    this.attachShadow({ mode: 'open' }).innerHTML = `
    <style>
      :host { display: flex; flex-direction: column; height: 100vh; overflow: hidden; }
      status-bar, chat-header, system-nav, message-composer { flex: none; }
      chat-header { z-index: 1; }
      chat-wallpaper { flex: 1; }
    </style>
    <status-bar></status-bar>
    <chat-header></chat-header>
    <chat-wallpaper>
      <message-list>
        <document-message></document-message>
        <chat-message out covered time="16:07"></chat-message>
        <chat-message out time="16:07">Agora tudo certo!</chat-message>
        <chat-message out time="16:07">Confirma em sua conta</chat-message>
        <chat-message out time="16:07">Se foi depositado</chat-message>
        <chat-message tail layout="over" time="16:08">Muito obrigado agora e correr atrás kkkk</chat-message>
        <chat-message out tail time="16:08">Boa</chat-message>
        <chat-message out layout="over" time="16:08">Gostaria de agradecer você e sua esposa</chat-message>
        <chat-message out time="16:08">Por confiar em meu trabalho!</chat-message>
        <chat-message out layout="below" time="16:08">Se precisarem, estou por aqui!</chat-message>
        <chat-message tail time="17:40">Muito obrigado</chat-message>
      </message-list>
      <message-composer></message-composer>
    </chat-wallpaper>
    <system-nav></system-nav>`;
  }
}
customElements.define('chat-app', ChatApp);
</script>
</body>
</html>
